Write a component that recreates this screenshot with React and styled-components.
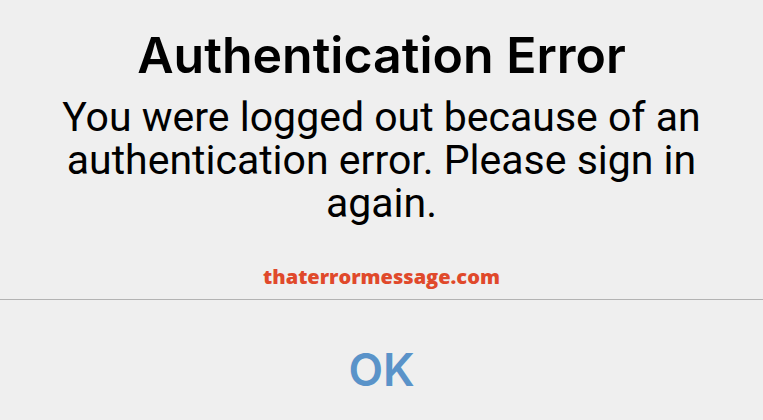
import styled, { createGlobalStyle } from "styled-components";

const Global = createGlobalStyle`
  html, body {
    margin: 0;
    padding: 0;
    background: #efefef;
  }
  body {
    font-family: Inter, "Liberation Sans", sans-serif;
  }
`;

const Dialog = styled.div`
  width: 763px;
  height: 420px;
  display: flex;
  flex-direction: column;
  background: #efefef;
  overflow: hidden;
`;

const Content = styled.div`
  display: flex;
  flex-direction: column;
  align-items: center;
  padding-top: 25px;
  height: 300px;
  box-sizing: border-box;
  border-bottom: 1.5px solid #b3b3b3;
`;

const Title = styled.h1`
  margin: 0;
  font-size: 50px;
  font-weight: 600;
  line-height: 60px;
  color: #000;
`;

const Message = styled.p`
  margin: 11px 0 0;
  font-family: Roboto, "Liberation Sans", sans-serif;
  font-size: 41px;
  font-weight: 400;
  line-height: 43px;
  color: #000;
  text-align: center;
`;

const Watermark = styled.div`
  margin-top: 38px;
  font-family: "Open Sans", sans-serif;
  font-weight: 800;
  font-size: 20px;
  color: #e0492b;
`;

const Button = styled.button`
  flex: 1;
  border: none;
  background: transparent;
  font-family: Inter, "Liberation Sans", sans-serif;
  font-size: 45px;
  font-weight: 600;
  color: #5a93c9;
  padding: 18px 0 0;
  cursor: pointer;
`;

export default function App() {
  return (
    <>
      <Global />
      <Dialog>
        <Content>
          <Title>Authentication Error</Title>
          <Message>
            You were logged out because of an
            <br />
            authentication error. Please sign in
            <br />
            again.
          </Message>
          <Watermark>thaterrormessage.com</Watermark>
        </Content>
        <Button>OK</Button>
      </Dialog>
    </>
  );
}
